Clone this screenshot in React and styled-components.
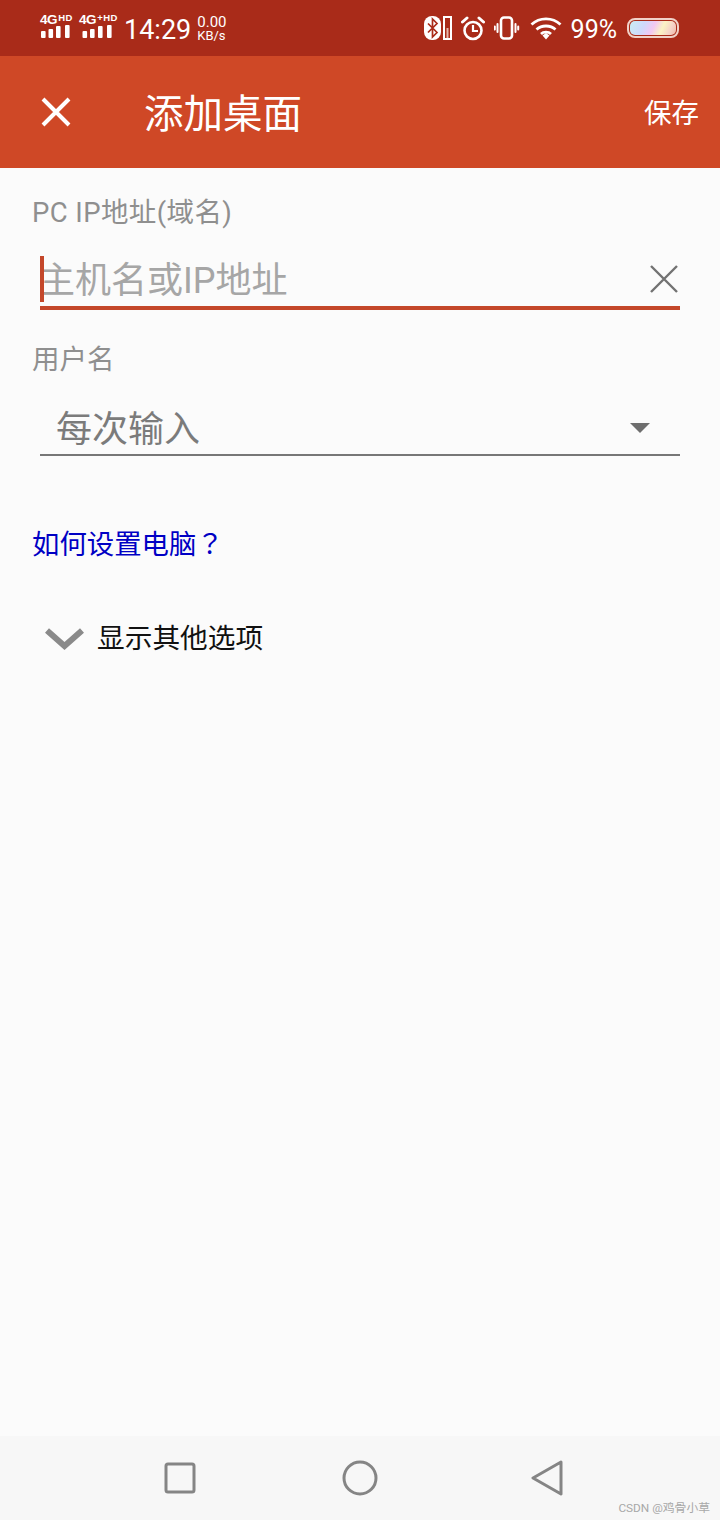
import React from 'react';
import styled, { createGlobalStyle } from 'styled-components';

const FONT = `Roboto, "Noto Sans CJK SC", sans-serif`;

const GlobalStyle = createGlobalStyle`
  html, body { margin: 0; padding: 0; background: #fbfbfb; }
  * { box-sizing: border-box; }
  body { font-family: ${FONT}; }
`;

const Page = styled.div`
  position: relative;
  width: 720px;
  height: 1520px;
  display: flex;
  flex-direction: column;
  background: #fbfbfb;
  overflow: hidden;
`;

const StatusBar = styled.div`
  height: 56px;
  flex: none;
  display: flex;
  align-items: center;
  justify-content: space-between;
  padding: 0 41px 0 40px;
  background: #a92b19;
  color: #fff;
`;

const StatusGroup = styled.div`
  display: flex;
  align-items: center;
  gap: ${(p) => p.$gap || 0}px;
`;

const Network = styled.div`
  display: flex;
  flex-direction: column;
  width: ${(p) => p.$w}px;
  margin-bottom: 4px;
`;

const NetLabel = styled.div`
  font: 700 13.5px/13px "Liberation Sans", sans-serif;
  letter-spacing: -0.4px;
  white-space: nowrap;
  height: 11px;
  sup {
    font-size: 9.5px;
    line-height: 0;
    vertical-align: 3px;
    margin-left: 1px;
    letter-spacing: 0.4px;
  }
`;

const Clock = styled.div`
  font-size: 27px;
  line-height: 32px;
  margin-top: 3px;
`;

const Speed = styled.div`
  margin-left: 6px;
  font-size: 15px;
  line-height: 13px;
  margin-top: 1px;
  small { display: block; font-size: 13px; line-height: 13px; }
`;

const Battery = styled.div`
  width: 52px;
  height: 20px;
  border: 2px solid #f1d2c8;
  border-radius: 8px;
  padding: 1px;
  margin-left: 1px;
  div {
    height: 100%;
    border-radius: 5px;
    background: linear-gradient(115deg, #c9eef5 0%, #cfd9fb 30%, #f3c8f2 50%, #fbf3c4 68%, #f6d3c8 85%, #f0b9a8 100%);
  }
`;

const Percent = styled.div`
  font-size: 25px;
  line-height: 28px;
  margin: 3px 0 0 -1px;
`;

const AppBar = styled.header`
  height: 112px;
  flex: none;
  display: flex;
  align-items: center;
  padding: 0 21px 0 41px;
  background: #cf4826;
  color: #fff;
`;

const Title = styled.h1`
  margin: 5px 0 0 73px;
  flex: 1;
  font-size: 39.5px;
  font-weight: 400;
  line-height: 50px;
`;

const SaveButton = styled.div`
  font-size: 27.5px;
  line-height: 36px;
  margin-top: 4px;
`;

const Form = styled.main`
  flex: 1;
  display: flex;
  flex-direction: column;
  padding: 27px 40px 0 33px;
`;

const FieldLabel = styled.div`
  font-size: 27.5px;
  line-height: 36px;
  margin-left: -1px;
  letter-spacing: ${(p) => p.$spacing || 0}px;
  color: #8f8f8f;
`;

const FieldRow = styled.div`
  display: flex;
  align-items: flex-end;
  margin-left: 7px;
  height: ${(p) => p.$h}px;
  padding: 0 2px ${(p) => p.$pb}px 0;
  border-bottom: ${(p) => p.$line};
  margin-bottom: ${(p) => p.$mb}px;
`;

const Caret = styled.div`
  position: relative;
  z-index: 1;
  width: 4px;
  height: 46px;
  background: #c4472a;
  margin: 0 -5px 2px 0;
`;

const Placeholder = styled.div`
  flex: 1;
  font-size: 36px;
  line-height: 46px;
  color: #a6a6a6;
`;

const SelectValue = styled(Placeholder)`
  color: #7b7b7b;
  padding-left: 16px;
`;

const IconSlot = styled.div`
  display: flex;
  margin: 0 ${(p) => p.$right}px ${(p) => p.$bottom}px 0;
`;

const HelpLink = styled.a`
  margin: 68px 0 0 -1px;
  font-size: 27.4px;
  line-height: 36px;
  color: #0000c4;
`;

const QuestionMark = styled.span`
  font-family: "Noto Sans CJK TC", sans-serif;
`;

const Expander = styled.div`
  display: flex;
  align-items: center;
  gap: 13px;
  margin: 56px 0 0 12px;
  font-size: 27.7px;
  line-height: 40px;
  color: #111;
`;

const NavBar = styled.nav`
  height: 84px;
  flex: none;
  display: flex;
  align-items: center;
  gap: 146px;
  padding-left: 164px;
  background: #f7f7f7;
  svg:last-child { margin-left: 7px; }
`;

const Watermark = styled.div`
  position: absolute;
  right: 10px;
  bottom: 4px;
  font-size: 11.8px;
  line-height: 16px;
  color: #a8a8a8;
`;

const Signal = ({ w, x }) => (
  <svg width={w} height="15" viewBox={`0 0 ${w} 15`} fill="#fff">
    {x.map(([l, h], i) => (
      <rect key={i} x={l} y={14 - h} width="4.6" height={h} rx="1" />
    ))}
  </svg>
);

const BluetoothBattery = () => (
  <svg width="28" height="26" viewBox="0 0 28 26">
    <rect x="0" y="1" width="17" height="24" rx="8" fill="#fff" />
    <path d="M4 8.5l9 9-4.5 4.5V4l4.5 4.5-9 9" fill="none" stroke="#a92b19" strokeWidth="1.7" />
    <rect x="20" y="2" width="7" height="22" fill="none" stroke="#fff" strokeWidth="2" />
    <rect x="22.5" y="13" width="2" height="10" fill="#e7b7ab" />
  </svg>
);

const Alarm = () => (
  <svg width="24" height="25" viewBox="0 0 24 25" fill="none" stroke="#fff">
    <circle cx="12" cy="14.5" r="8.5" strokeWidth="2.6" />
    <path d="M12 9v6h5" strokeWidth="2.2" />
    <path d="M1.5 6L6 2M22.5 6L18 2" strokeWidth="3" strokeLinecap="round" />
  </svg>
);

const Vibrate = () => (
  <svg width="27" height="24" viewBox="0 0 27 24" fill="none" stroke="#fff" strokeWidth="2" strokeLinecap="round">
    <rect x="7" y="1.5" width="11" height="21" rx="3" strokeWidth="2.6" />
    <path d="M3.5 8v8M0.8 10.5v3M21.5 8v8M24.2 10.5v3" />
  </svg>
);

const Wifi = () => (
  <svg width="33" height="24" viewBox="0 0 33 24" fill="none" stroke="#fff" strokeWidth="2.8">
    <path d="M1.5 8.5C9.5 1 22.5 1 30.5 8.5" />
    <path d="M6.5 13.5C11.5 8.8 20.5 8.8 25.5 13.5" />
    <path d="M11 18C13.5 15.6 18.5 15.6 21 18" />
    <path d="M12.5 19.5L16 17L19.5 19.5L16 23.5Z" fill="#fff" stroke="none" />
  </svg>
);

const CloseIcon = () => (
  <svg width="30" height="30" viewBox="0 0 30 30" stroke="#fff" strokeWidth="4" fill="none">
    <path d="M2 2l26 26M28 2L2 28" />
  </svg>
);

const ClearIcon = () => (
  <svg width="28" height="28" viewBox="0 0 28 28" stroke="#727272" strokeWidth="2.4" fill="none" display="block">
    <path d="M1 1l26 26M27 1L1 27" />
  </svg>
);

const DropArrow = () => (
  <svg width="20" height="10" viewBox="0 0 20 10" fill="#6e6e6e" display="block">
    <path d="M0 0h20L10 10z" />
  </svg>
);

const Chevron = () => (
  <svg width="39" height="22" viewBox="0 0 39 22" fill="none" stroke="#8a8a8a" strokeWidth="6">
    <path d="M2 2.5L19.5 18L37 2.5" />
  </svg>
);

const NavSquare = () => (
  <svg width="32" height="32" viewBox="0 0 32 32" fill="none" stroke="#858585" strokeWidth="3">
    <rect x="2" y="2" width="28" height="28" rx="2" />
  </svg>
);

const NavCircle = () => (
  <svg width="36" height="36" viewBox="0 0 36 36" fill="none" stroke="#858585" strokeWidth="3">
    <circle cx="18" cy="18" r="16" />
  </svg>
);

const NavBack = () => (
  <svg width="32" height="36" viewBox="0 0 32 36" fill="none" stroke="#858585" strokeWidth="3" strokeLinejoin="round">
    <path d="M30 2L2 18L30 34Z" />
  </svg>
);

export default function App() {
  return (
    <Page>
      <GlobalStyle />
      <StatusBar>
        <StatusGroup>
          <Network $w={39}>
            <NetLabel>4G<sup>HD</sup></NetLabel>
            <Signal w={32} x={[[1, 7], [8.5, 9], [16, 12], [25, 13]]} />
          </Network>
          <Network $w={45}>
            <NetLabel>4G<sup>+HD</sup></NetLabel>
            <Signal w={35} x={[[3.5, 7], [11, 9], [19, 12], [28, 13]]} />
          </Network>
          <Clock>14:29</Clock>
          <Speed>0.00<small>KB/s</small></Speed>
        </StatusGroup>
        <StatusGroup $gap={9}>
          <BluetoothBattery />
          <Alarm />
          <Vibrate />
          <Wifi />
          <Percent>99%</Percent>
          <Battery><div /></Battery>
        </StatusGroup>
      </StatusBar>

      <AppBar>
        <CloseIcon />
        <Title>添加桌面</Title>
        <SaveButton>保存</SaveButton>
      </AppBar>

      <Form>
        <FieldLabel $spacing={0.4}>PC IP地址(域名)</FieldLabel>
        <FieldRow $h={79} $pb={2} $line="4px solid #c4472a" $mb={32}>
          <Caret />
          <Placeholder>主机名或IP地址</Placeholder>
          <IconSlot $right={0} $bottom={11}><ClearIcon /></IconSlot>
        </FieldRow>
        <FieldLabel>用户名</FieldLabel>
        <FieldRow $h={78} $pb={1} $line="2px solid #777" $mb={0}>
          <SelectValue>每次输入</SelectValue>
          <IconSlot $right={28} $bottom={20}><DropArrow /></IconSlot>
        </FieldRow>
        <HelpLink>如何设置电脑<QuestionMark>？</QuestionMark></HelpLink>
        <Expander>
          <Chevron />
          显示其他选项
        </Expander>
      </Form>

      <NavBar>
        <NavSquare />
        <NavCircle />
        <NavBack />
      </NavBar>
      <Watermark>CSDN @鸡骨小草</Watermark>
    </Page>
  );
}
